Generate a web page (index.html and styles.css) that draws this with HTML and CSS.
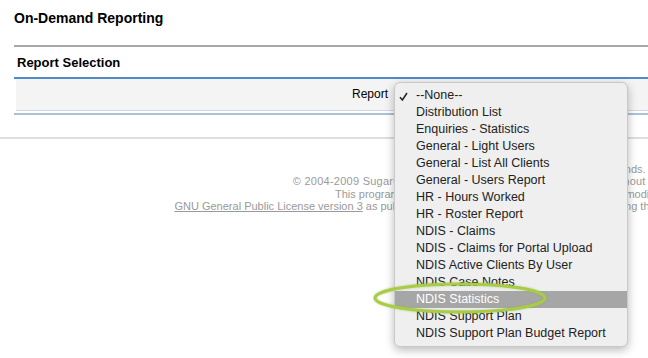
FILE: index.html
```html
<!DOCTYPE html>
<html lang="en">

<head>
    <meta charset="UTF-8">
    <title>On-Demand Reporting</title>
    <link rel="stylesheet" href="styles.css">
</head>

<body>
    <div class="content">
        <h2 class="title">On-Demand Reporting</h2>
        <div class="section">
            <h3 class="section-title">Report Selection</h3>
            <div class="panel">
                <div class="field-row">
                    <label class="field-label">Report</label>
                    <div class="select-wrap">
                        <ul class="dropdown">
                            <li class="checked">
                                <svg class="check" width="9" height="9" viewBox="0 0 9 9">
                                    <path d="M1 5.2 L3.4 8 L8 1" fill="none" stroke="#222" stroke-width="1.5" />
                                </svg>
                                --None--
                            </li>
                            <li>Distribution List</li>
                            <li>Enquiries - Statistics</li>
                            <li>General - Light Users</li>
                            <li>General - List All Clients</li>
                            <li>General - Users Report</li>
                            <li>HR - Hours Worked</li>
                            <li>HR - Roster Report</li>
                            <li>NDIS - Claims</li>
                            <li>NDIS - Claims for Portal Upload</li>
                            <li>NDIS Active Clients By User</li>
                            <li>NDIS Case Notes</li>
                            <li class="active">NDIS Statistics</li>
                            <li>NDIS Support Plan</li>
                            <li>NDIS Support Plan Budget Report</li>
                        </ul>
                    </div>
                </div>
            </div>
            <div class="panel-end"></div>
        </div>
    </div>

    <div class="divider"></div>

    <div class="footer-wrap">
        <div class="footer">
            <div>Server response time: 0.12 seconds.</div>
            <div class="copyright">&copy; 2004-2009 SugarCRM Inc. The Program is provided AS IS, without warranty. Licensed under GPLv3.</div>
            <div>This program is free software; you can redistribute it and/or modify it under the terms of the</div>
            <div><a href="#">GNU General Public License version 3</a> as published by the Free Software Foundation including the additional permission set forth in the source code header.</div>
        </div>
    </div>

    <svg class="circle-mark" width="180" height="36" viewBox="0 0 180 36">
        <ellipse cx="90" cy="18" rx="85" ry="14" fill="none" stroke="#a8cc48" stroke-width="3" />
    </svg>
</body>

</html>
```

FILE: styles.css
```css
* {
    box-sizing: border-box;
    margin: 0;
    padding: 0;
}

body {
    font-family: 'Liberation Sans', Arial, sans-serif;
    background: #fff;
    color: #000;
    width: 648px;
    height: 358px;
    overflow: hidden;
    position: relative;
}

.content {
    padding-left: 14px;
}

.title {
    font-size: 14px;
    font-weight: bold;
    line-height: 16px;
    padding-top: 10px;
    height: 45px;
}

.section {
    border-top: 2px solid #a8a8a8;
}

.section-title {
    font-size: 13px;
    font-weight: bold;
    line-height: 15px;
    padding: 8px 0 7px 3px;
    border-bottom: 2px solid #4f8acb;
}

.panel {
    margin-left: 2px;
    background: #f4f4f4;
    height: 32px;
    border-bottom: 1px solid #cdd8e2;
}

.field-row {
    display: flex;
    align-items: flex-start;
}

.field-label {
    width: 378px;
    text-align: right;
    padding-right: 6px;
    font-size: 12px;
    line-height: 14px;
    padding-top: 8px;
}

.select-wrap {
    position: relative;
}

.dropdown {
    position: absolute;
    left: 0;
    top: 3px;
    width: 234px;
    list-style: none;
    background: #efefef;
    border: 1px solid #c9c9c9;
    border-radius: 6px;
    box-shadow: 0 3px 10px rgba(0, 0, 0, 0.28);
    padding: 4px 0 4px;
    z-index: 2;
    font-size: 12.5px;
    color: #222;
}

.dropdown li {
    height: 17px;
    line-height: 17px;
    padding-left: 21px;
    white-space: nowrap;
    position: relative;
}

.dropdown li.active {
    background: #a6a6a6;
    color: #fff;
}

.check {
    position: absolute;
    left: 4px;
    top: 5px;
}

.panel-end {
    height: 2px;
    margin-top: 2px;
    background: #a9c2d7;
}

.divider {
    margin-top: 22px;
    height: 2px;
    background: #dedede;
}

.footer-wrap {
    overflow: hidden;
    padding-top: 24px;
}

.footer {
    width: 1112px;
    text-align: center;
    font-size: 11px;
    line-height: 12.3px;
    color: #9a9a9a;
}

.footer .copyright {
    letter-spacing: 0.25px;
}

.footer a {
    color: #9a9a9a;
}

.circle-mark {
    position: absolute;
    left: 370px;
    top: 280px;
    z-index: 3;
    filter: drop-shadow(0 0 1px rgba(140, 180, 40, 0.5));
}
```
